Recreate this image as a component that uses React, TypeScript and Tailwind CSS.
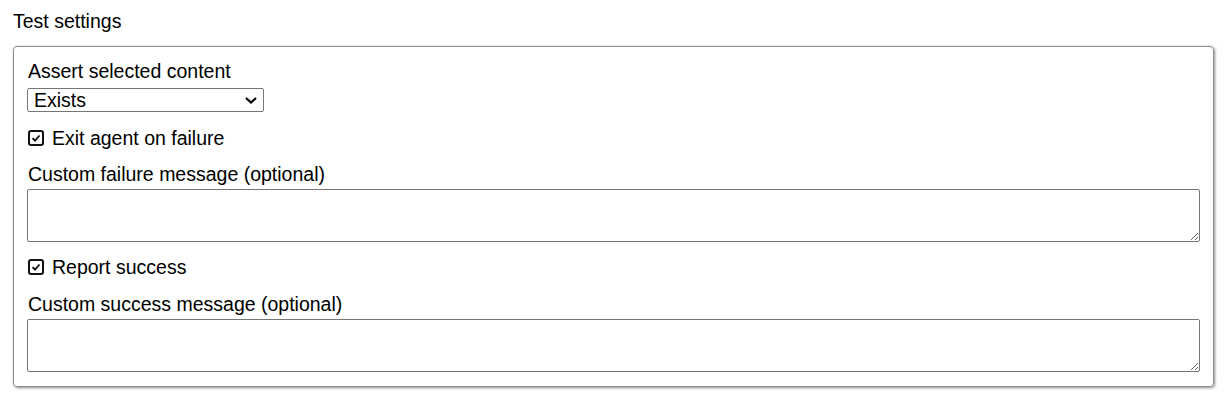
import React from "react";

const Check: React.FC<{ label: string }> = ({ label }) => {
  return (
    <label className="flex items-center h-[22px]">
      <span className="ml-px shrink-0 flex items-center justify-center w-[16px] h-[16px] border-2 border-[#111] rounded-[3px] bg-white">
        <svg viewBox="0 0 12 12" className="w-[10px] h-[10px]">
          <path d="M1.8 6.2 L4.8 9.2 L10.2 3" fill="none" stroke="#111" strokeWidth="2.2" />
        </svg>
      </span>
      <span className="ml-[8px]">{label}</span>
    </label>
  );
};

const App: React.FC = () => {
  return (
    <div
      className="px-[13px] pt-[10px] text-[19.5px] leading-[22px] text-black bg-white min-h-[400px]"
      style={{ fontFamily: '"Liberation Sans", Arial, sans-serif' }}
    >
      <h2 className="font-normal">Test settings</h2>
      <div className="mt-[14px] border border-[#8c8c8c] rounded-[4px] shadow-[1px_1px_3px_rgba(0,0,0,0.45)] px-[13px] pt-[13px] pb-[14px]">
        <div className="pl-px">Assert selected content</div>
        <div className="relative mt-[6px] w-[237px] h-[24px]">
          <select className="appearance-none w-full h-full border border-[#767676] rounded-[2px] pl-[6px] text-[19.5px] leading-[22px] bg-white text-black outline-none">
            <option>Exists</option>
            <option>Does not exist</option>
          </select>
          <svg
            viewBox="0 0 12 7"
            className="absolute right-[7px] top-[9px] w-[12px] h-[7px] pointer-events-none"
          >
            <path d="M1 1 L6 5.5 L11 1" fill="none" stroke="#000" strokeWidth="2.2" />
          </svg>
        </div>
        <div className="mt-[15px]">
          <Check label="Exit agent on failure" />
        </div>
        <div className="mt-[14px] pl-px">Custom failure message (optional)</div>
        <textarea className="block mt-1 w-full h-[53px] border border-[#767676] rounded-[2px] outline-none" />
        <div className="mt-[14px]">
          <Check label="Report success" />
        </div>
        <div className="mt-[15px] pl-px">Custom success message (optional)</div>
        <textarea className="block mt-1 w-full h-[53px] border border-[#767676] rounded-[2px] outline-none" />
      </div>
    </div>
  );
};

export default App;
